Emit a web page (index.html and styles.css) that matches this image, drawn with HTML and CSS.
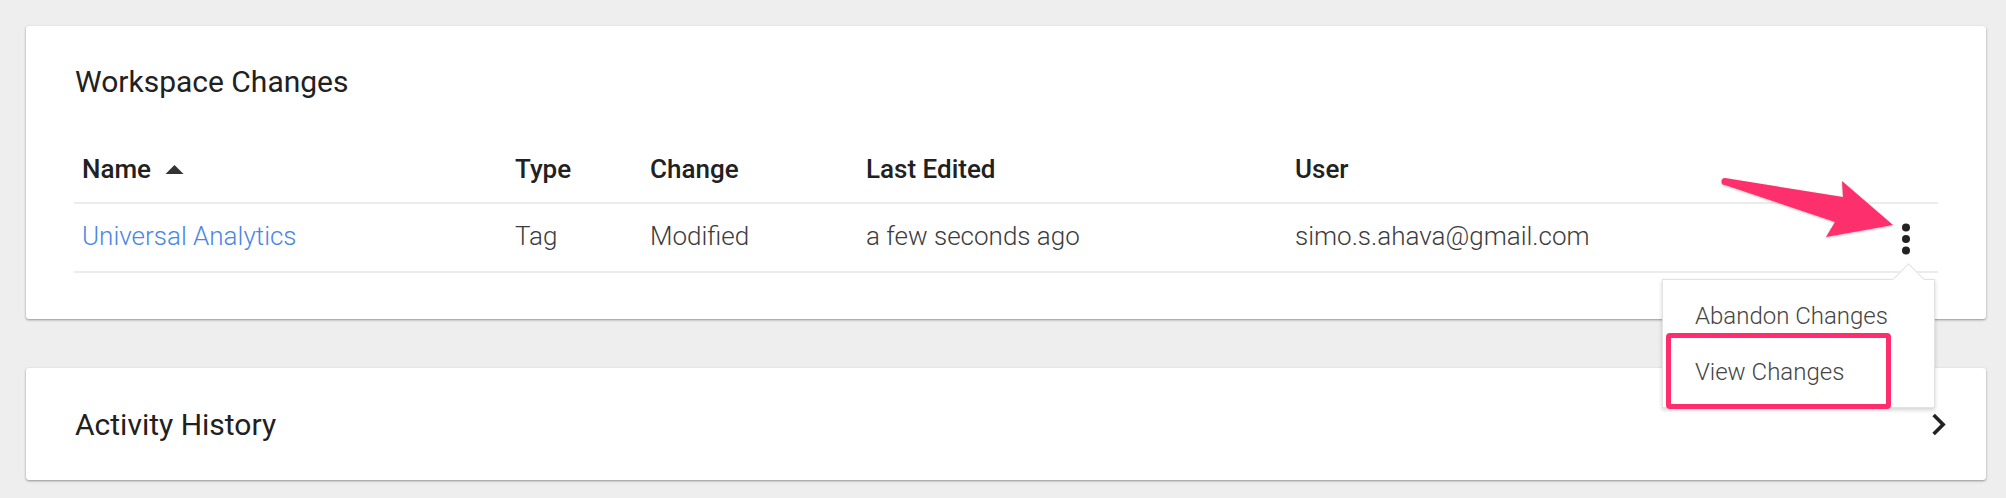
FILE: index.html
```html
<!DOCTYPE html>
<html lang="en">
<head>
<meta charset="utf-8">
<title>Workspace Changes</title>
<link rel="stylesheet" href="styles.css">
</head>
<body>
<div class="page">
  <section class="card changes">
    <h2 class="title">Workspace Changes</h2>
    <div class="table">
      <div class="row head">
        <div class="cell">Name <svg class="sort" viewBox="7 9 10 5" width="19" height="9"><path d="M7 14l5-5 5 5z"/></svg></div>
        <div class="cell">Type</div>
        <div class="cell">Change</div>
        <div class="cell">Last Edited</div>
        <div class="cell">User</div>
        <div class="cell act"></div>
      </div>
      <div class="row body">
        <div class="cell"><a class="link" href="#">Universal Analytics</a></div>
        <div class="cell">Tag</div>
        <div class="cell">Modified</div>
        <div class="cell">a few seconds ago</div>
        <div class="cell">simo.s.ahava@gmail.com</div>
        <div class="cell act"><svg class="kebab" viewBox="0 0 24 24" width="48" height="48"><circle cx="12" cy="6.3" r="2"/><circle cx="12" cy="12" r="2"/><circle cx="12" cy="17.7" r="2"/></svg></div>
      </div>
    </div>
  </section>
  <section class="card history">
    <h2 class="title">Activity History</h2>
    <svg class="chev" viewBox="0 0 24 24" width="43" height="43"><path d="M10 6L8.59 7.41 13.17 12l-4.58 4.59L10 18l6-6z"/></svg>
  </section>

  <div class="menu">
    <div class="item">Abandon Changes</div>
    <div class="item">View Changes</div>
  </div>
  <div class="highlight"></div>
  <svg class="arrow" viewBox="0 0 190 80" width="190" height="80"><path d="M10,8 L128,27 L127,11 L178,55 L111,67 L120,52 L10,15 A3.5,3.5 0 0 1 10,8 Z"/></svg>
</div>
</body>
</html>
```

FILE: styles.css
```css
html, body {
  margin: 0;
  background: #eeeeee;
}
body {
  font-family: Roboto, "Noto Sans", Arial, sans-serif;
  color: #212121;
}
.page {
  position: relative;
  width: 1960px;
  padding: 26px 20px 18px 26px;
  display: flex;
  flex-direction: column;
  gap: 49px;
}
.card {
  background: #fff;
  border-radius: 3px;
  box-shadow: 0 1px 3px rgba(0, 0, 0, 0.22), 0 1px 2px rgba(0, 0, 0, 0.2);
}
.title {
  margin: 0;
  font-size: 30px;
  font-weight: 400;
  line-height: 35px;
  color: #212121;
}
.changes {
  padding: 38px 48px 46px 48px;
}
.changes .title {
  margin: 0 0 37px 1px;
}
.table {
  display: flex;
  flex-direction: column;
}
.row {
  display: grid;
  grid-template-columns: 433px 135px 216px 429px 1fr 56px;
  align-items: center;
  border-bottom: 2px solid #ececec;
}
.row.head {
  height: 66px;
  font-size: 26px;
  font-weight: 500;
  color: #212121;
}
.row.body {
  height: 67px;
  font-size: 26px;
  font-weight: 300;
  color: #3c3c3c;
}
.row.body .cell {
  padding-top: 0;
  margin-top: -3px;
}
.cell {
  padding-left: 8px;
  display: flex;
  align-items: center;
  white-space: nowrap;
}
.sort {
  margin-left: 14px;
  fill: #333;
}
.link {
  color: #4a86e4;
  text-decoration: none;
}
.row .cell.act {
  padding: 0 8px 0 0;
  margin-top: 3px;
  justify-content: flex-end;
}
.kebab {
  fill: #222;
}
.history {
  height: 112px;
  padding: 0 26px 0 49px;
  display: flex;
  align-items: center;
  justify-content: space-between;
}
.chev {
  fill: #222;
}
.menu {
  position: absolute;
  left: 1662px;
  top: 279px;
  width: 273px;
  height: 129px;
  box-sizing: border-box;
  padding-top: 8px;
  background: #fff;
  border: 1px solid #e2e2e2;
  box-shadow: 0 2px 4px rgba(0, 0, 0, 0.18);
}
.menu::before {
  content: "";
  position: absolute;
  left: 234px;
  top: -12px;
  width: 22px;
  height: 22px;
  background: #fff;
  border-top: 1px solid #e2e2e2;
  border-left: 1px solid #e2e2e2;
  transform: rotate(45deg);
}
.item {
  position: relative;
  padding-left: 32px;
  font-size: 24px;
  font-weight: 300;
  line-height: 56px;
  color: #444;
  white-space: nowrap;
}
.highlight {
  position: absolute;
  left: 1666px;
  top: 333px;
  width: 225px;
  height: 76px;
  box-sizing: border-box;
  border: 5px solid #ff2d6e;
  border-radius: 4px;
}
.arrow {
  position: absolute;
  left: 1715px;
  top: 170px;
  fill: #fd2f6d;
  filter: drop-shadow(0 1px 1px rgba(0, 0, 0, 0.25));
}
```
